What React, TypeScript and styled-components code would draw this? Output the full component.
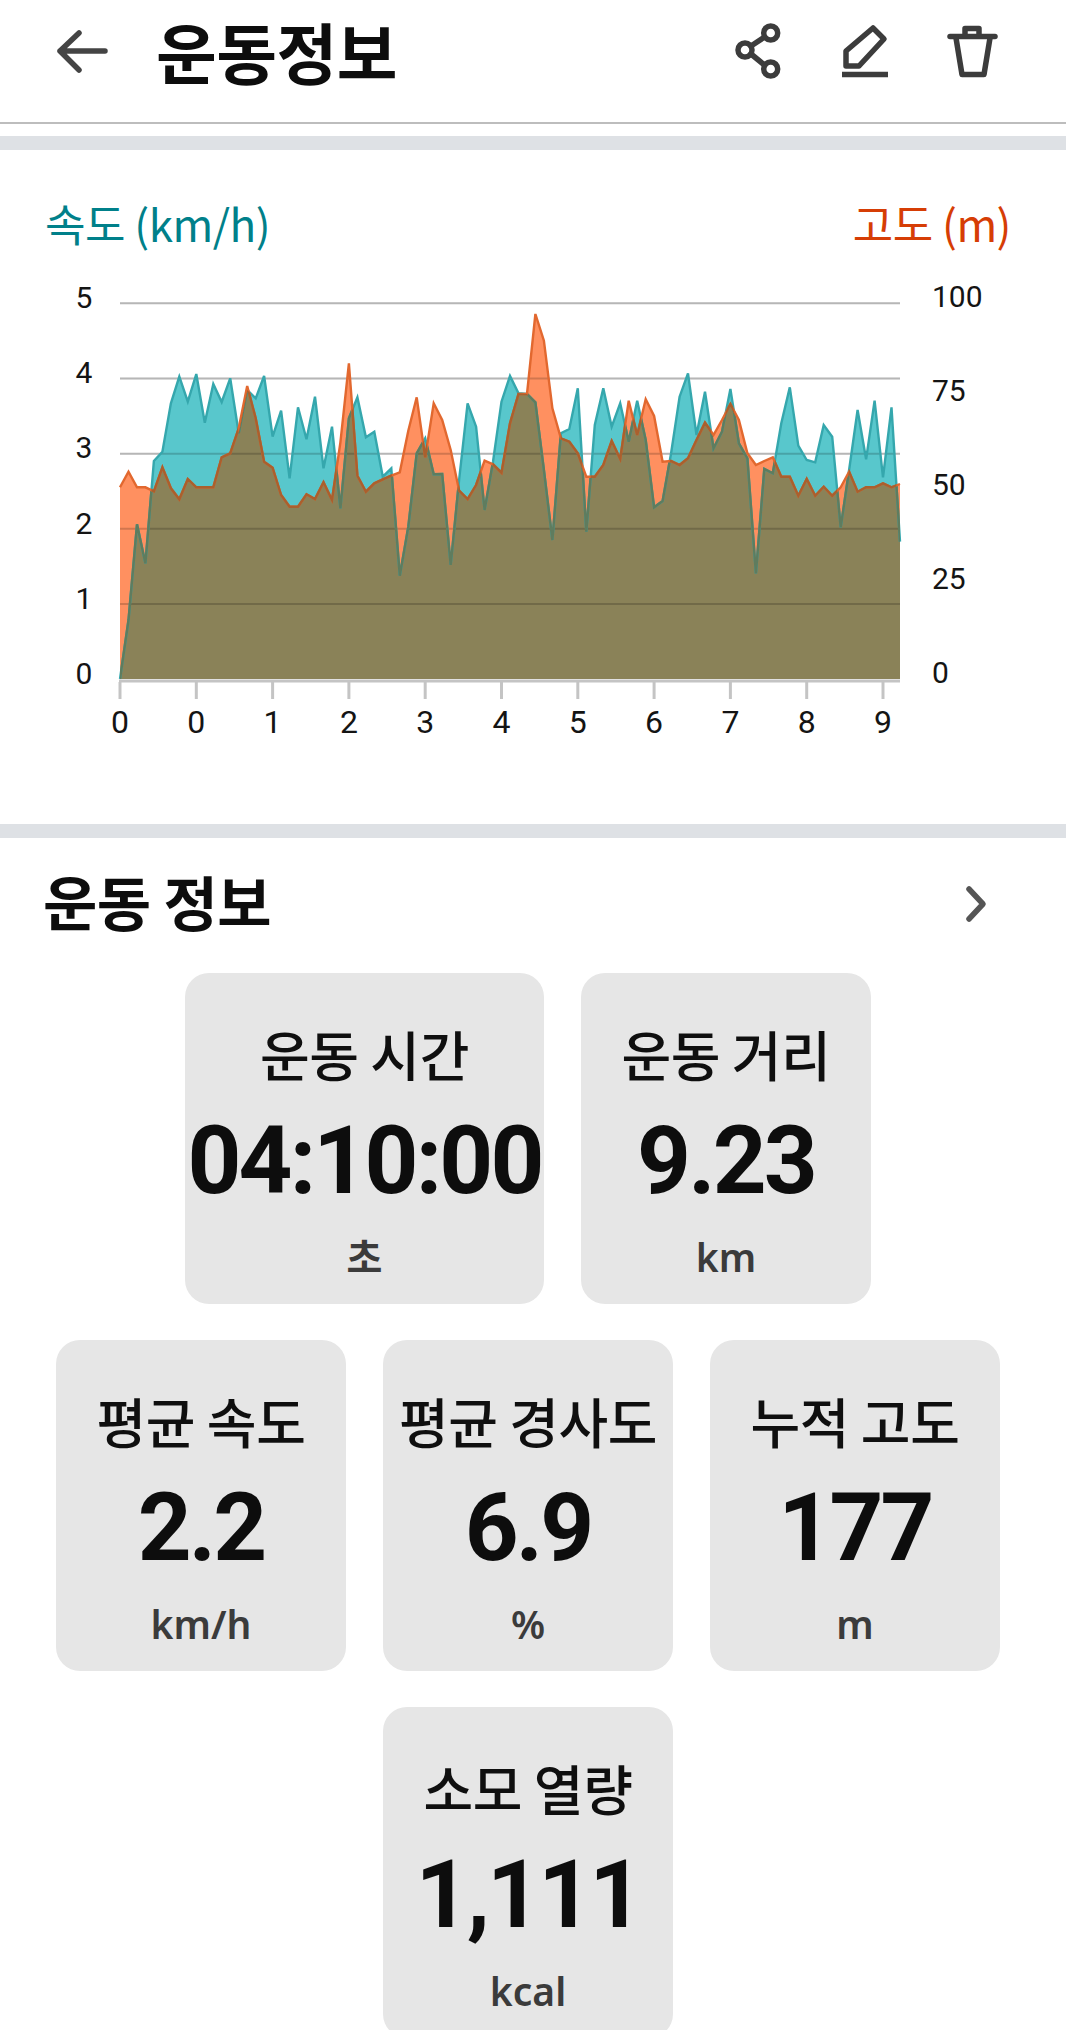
import React from "react";
import styled, { createGlobalStyle } from "styled-components";

const KR = `"Noto Sans CJK KR", "Noto Sans", sans-serif`;

const Global = createGlobalStyle`
  html, body { margin: 0; padding: 0; background: #fff; }
  body { font-family: ${KR}; overflow: hidden; }
`;

const Page = styled.div`
  width: 1066px;
  height: 2030px;
  overflow: hidden;
  background: #fff;
`;

const Header = styled.header`
  height: 124px;
  box-sizing: border-box;
  border-bottom: 2px solid #bdbdbd;
  padding: 0 64px 20px 52px;
  display: flex;
  align-items: center;
`;

const HeaderTitle = styled.h1`
  margin: 0 0 2px 44px;
  flex: 1;
  font: 700 66px/76px ${KR};
  color: #0d0d0d;
  letter-spacing: -0.5px;
`;

const IconSvg = styled.svg<{ $color?: string }>`
  display: block;
  width: 60px;
  height: 60px;
  fill: none;
  stroke: ${(p) => p.$color ?? "#3c3c3c"};
  stroke-width: 5.5;
  stroke-linecap: round;
  stroke-linejoin: round;
`;

const Actions = styled.div`
  display: flex;
  gap: 47px;
`;

const Band = styled.div<{ $top?: number }>`
  height: 14px;
  margin-top: ${(p) => p.$top ?? 0}px;
  background: #dee1e5;
`;

const ChartSection = styled.section`
  height: 674px;
`;

const LegendRow = styled.div`
  box-sizing: border-box;
  height: 110px;
  padding: 36px 55px 0 45px;
  display: flex;
  justify-content: space-between;
  align-items: center;
`;

const LegendLabel = styled.span<{ $color: string }>`
  font: 400 44px/60px ${KR};
  color: ${(p) => p.$color};
  letter-spacing: -0.5px;
`;

const ChartSvg = styled.svg`
  display: block;
  width: 1066px;
  height: 564px;
`;

const AxisText = styled.text<{ $size?: number }>`
  font: 400 ${(p) => p.$size ?? 30}px "Roboto", sans-serif;
  fill: #141414;
`;

const SectionRow = styled.div`
  height: 132px;
  margin-bottom: 3px;
  padding: 0 74px 0 43px;
  display: flex;
  align-items: center;
  justify-content: space-between;
`;

const SectionTitle = styled.h2`
  margin: 0 0 6px;
  font: 700 59px/70px ${KR};
  color: #0d0d0d;
  letter-spacing: -0.5px;
`;

const Chevron = styled.svg`
  display: block;
  width: 30px;
  height: 44px;
  fill: none;
  stroke: #555;
  stroke-width: 5.5;
  stroke-linecap: round;
  stroke-linejoin: round;
`;

const CardGrid = styled.div`
  padding: 0 55px 0 45px;
  display: flex;
  flex-wrap: wrap;
  justify-content: center;
  gap: 36px 37px;
`;

const Card = styled.div<{ $wide?: boolean }>`
  box-sizing: border-box;
  width: ${(p) => (p.$wide ? 359 : 290)}px;
  height: 331px;
  border-radius: 24px;
  background: #e6e6e6;
  display: flex;
  flex-direction: column;
  align-items: center;
  padding-top: 54px;
`;

const CardLabel = styled.div`
  font: 500 54px/54px ${KR};
  color: #0f0f0f;
  white-space: nowrap;
  letter-spacing: -0.4px;
`;

const CardValue = styled.div`
  margin-top: 30px;
  font: 700 94px/100px "Roboto", sans-serif;
  color: #0d0d0d;
  white-space: nowrap;
  letter-spacing: -2.8px;
`;

const CardUnit = styled.div`
  margin-top: 24px;
  font: 600 39px/44px "Noto Sans", "Noto Sans CJK KR", sans-serif;
  color: #3b3b3b;
`;

const speed = [
  1197,1020,733,850,543,515,370,290,365,282,428,312,366,295,460,330,355,288,470,392,595,382,478,350,565,440,685,415,352,472,455,590,565,887,740,520,475,583,582,855,600,370,440,690,545,365,288,340,
  342,367,570,780,460,447,325,755,435,325,440,370,485,362,480,682,663,520,350,280,465,335,505,455,327,490,535,880,567,580,430,322,497,540,547,435,470,742,570,390,538,362,592,382,785,
];
const altitude = [
  622,575,622,622,634,562,625,658,597,622,622,622,532,520,445,318,415,545,563,645,680,680,643,657,607,660,487,250,587,635,610,598,587,577,452,352,532,370,420,510,632,657,615,542,553,578,430,342,
  342,102,182,385,475,485,520,590,590,555,483,537,362,465,358,408,545,543,555,535,480,428,465,420,372,420,520,555,543,532,590,590,647,597,647,620,647,622,575,635,622,622,610,622,612,
];

const X0 = 120;
const X1 = 900;
const Y0 = 679;
const toPoints = (d: number[]) =>
  d.map((z, i) => [X0 + (i * (X1 - X0)) / (d.length - 1), 280 + z / 3] as const);
const linePath = (d: number[]) =>
  toPoints(d).map(([x, y], i) => `${i ? "L" : "M"}${x.toFixed(1)} ${y.toFixed(1)}`).join(" ");
const areaPath = (d: number[]) => `${linePath(d)} L${X1} ${Y0} L${X0} ${Y0} Z`;

const gridY = [303.3, 378.6, 453.7, 528.7, 604];
const leftLabels = [
  ["5", 308],
  ["4", 383],
  ["3", 458],
  ["2", 534],
  ["1", 609],
  ["0", 684],
] as const;
const rightLabels = [
  ["100", 307],
  ["75", 401],
  ["50", 495],
  ["25", 589],
  ["0", 683],
] as const;
const xLabels = ["0", "0", "1", "2", "3", "4", "5", "6", "7", "8", "9"];

function Chart() {
  const sp = areaPath(speed);
  const al = areaPath(altitude);
  return (
    <ChartSvg viewBox="0 260 1066 564">
      <defs>
        <clipPath id="inSpeed"><path d={sp} /></clipPath>
        <clipPath id="inAlt"><path d={al} /></clipPath>
      </defs>
      {gridY.map((y) => (
        <line key={y} x1={X0} x2={X1} y1={y} y2={y} stroke="#dedede" strokeWidth={2} />
      ))}
      <path d={al} fill="#ff9060" />
      <path d={sp} fill="#58c7cc" />
      <path d={al} fill="#8a8258" clipPath="url(#inSpeed)" />
      {gridY.map((y) => (
        <line key={y} x1={X0} x2={X1} y1={y} y2={y} stroke="rgba(0,0,0,0.18)" strokeWidth={2} />
      ))}
      <path d={linePath(speed)} fill="none" stroke="#35a7ad" strokeWidth={2.4} />
      <path d={linePath(speed)} fill="none" stroke="#5f7c5e" strokeWidth={2.4} clipPath="url(#inAlt)" />
      <path d={linePath(altitude)} fill="none" stroke="#e2682f" strokeWidth={2.4} />
      <path d={linePath(altitude)} fill="none" stroke="#a9602e" strokeWidth={2.4} clipPath="url(#inSpeed)" />
      <line x1={X0 - 1} x2={X1} y1={681} y2={681} stroke="#c4c4c4" strokeWidth={3} />
      {xLabels.map((t, i) => {
        const x = X0 + i * 76.3;
        return (
          <g key={i}>
            <line x1={x} x2={x} y1={682} y2={699} stroke="#c4c4c4" strokeWidth={3} />
            <AxisText $size={32} x={x} y={733} textAnchor="middle">{t}</AxisText>
          </g>
        );
      })}
      {leftLabels.map(([t, y]) => (
        <AxisText key={t} x={84} y={y} textAnchor="middle">{t}</AxisText>
      ))}
      {rightLabels.map(([t, y]) => (
        <AxisText key={t} x={932} y={y}>{t}</AxisText>
      ))}
    </ChartSvg>
  );
}

const BackIcon = () => (
  <IconSvg viewBox="0 0 60 60" $color="#444">
    <path d="M8 30H53M27 12L8 30L27 49" />
  </IconSvg>
);
const ShareIcon = () => (
  <IconSvg viewBox="0 0 60 60">
    <circle cx="42.7" cy="12" r="7" />
    <circle cx="17" cy="29" r="7" />
    <circle cx="42.7" cy="48" r="7" />
    <path d="M23 25L36.5 16M23 33L36.5 44" />
  </IconSvg>
);
const PencilIcon = () => (
  <IconSvg viewBox="0 0 60 60">
    <path d="M11 45V30L38 7L49 18L24 45Z" />
    <path d="M7 53.5H53" strokeLinecap="butt" />
  </IconSvg>
);
const TrashIcon = () => (
  <IconSvg viewBox="0 0 60 60">
    <path d="M8 15.5H53" />
    <path d="M23 14V7.5H37V14" />
    <path d="M14 17L20 53.5H42L48 17" />
  </IconSvg>
);

const cards = [
  { label: "운동 시간", value: "04:10:00", unit: "초", wide: true },
  { label: "운동 거리", value: "9.23", unit: "km" },
  { label: "평균 속도", value: "2.2", unit: "km/h" },
  { label: "평균 경사도", value: "6.9", unit: "%" },
  { label: "누적 고도", value: "177", unit: "m" },
  { label: "소모 열량", value: "1,111", unit: "kcal" },
];

export default function App() {
  return (
    <Page>
      <Global />
      <Header>
        <BackIcon />
        <HeaderTitle>운동정보</HeaderTitle>
        <Actions>
          <ShareIcon />
          <PencilIcon />
          <TrashIcon />
        </Actions>
      </Header>
      <Band $top={12} />
      <ChartSection>
        <LegendRow>
          <LegendLabel $color="#00808a">속도 (km/h)</LegendLabel>
          <LegendLabel $color="#d63d05">고도 (m)</LegendLabel>
        </LegendRow>
        <Chart />
      </ChartSection>
      <Band />
      <SectionRow>
        <SectionTitle>운동 정보</SectionTitle>
        <Chevron viewBox="0 0 30 44">
          <path d="M7 7L21 22L7 37" />
        </Chevron>
      </SectionRow>
      <CardGrid>
        {cards.map((c) => (
          <Card key={c.label} $wide={c.wide}>
            <CardLabel>{c.label}</CardLabel>
            <CardValue>{c.value}</CardValue>
            <CardUnit>{c.unit}</CardUnit>
          </Card>
        ))}
      </CardGrid>
    </Page>
  );
}
